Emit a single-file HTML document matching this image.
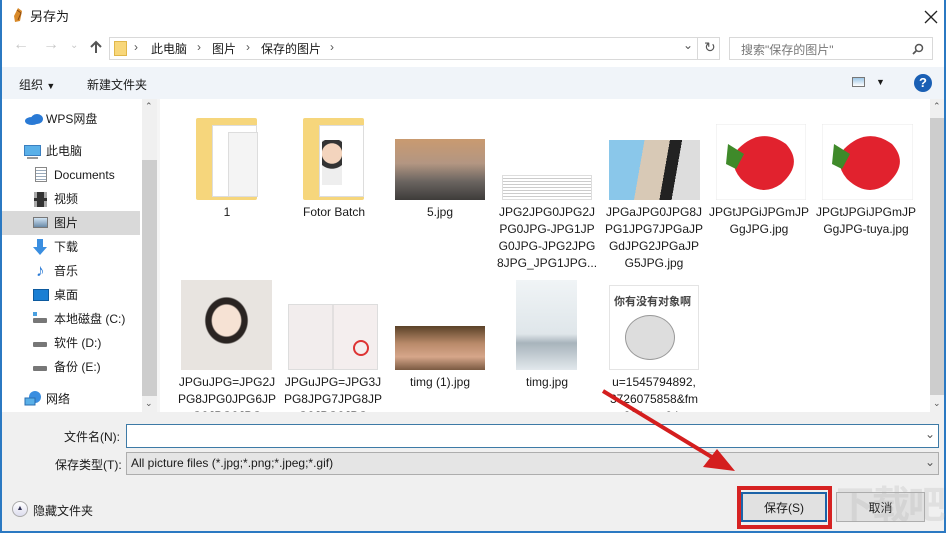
<!DOCTYPE html>
<html><head><meta charset="utf-8"><style>
*{margin:0;padding:0;box-sizing:border-box}
html,body{width:946px;height:533px;overflow:hidden}
body{background:#fff;font-family:"Liberation Sans","Noto Sans CJK SC",sans-serif;font-size:12px;color:#1a1a1a;position:relative}
.a{position:absolute;white-space:nowrap}
.lbl{position:absolute;width:100px;text-align:center;line-height:17px;font-size:12px;overflow:hidden}
.side div{position:absolute;left:0;width:142px;height:24px;line-height:24px;font-size:12px}
.ico{position:absolute}
</style></head><body>
<div class="a" style="left:0;top:0;width:2px;height:533px;background:#2b79c2"></div>
<div class="a" style="right:0;top:0;width:2px;height:533px;background:#2b79c2"></div>
<div class="a" style="left:0;bottom:0;width:946px;height:2px;background:#2b79c2"></div>
<!-- title -->
<svg class="a" style="left:12px;top:7px" width="12" height="16"><path d="M6 1 L10 4 L8 14 L3 15 L2 9 Z" fill="#d98a2a"/><path d="M5 3 L9 6 L6 13" stroke="#8a4a12" fill="none"/></svg>
<div class="a" style="left:30px;top:6px;font-size:13px">另存为</div>
<svg class="a" style="left:322px;top:0;left:924px;top:10px" width="14" height="14"><path d="M1 1L13 13M13 1L1 13" stroke="#222" stroke-width="1.3"/></svg>
<!-- nav -->
<div class="a" style="left:13px;top:36px;font-size:16px;color:#c8c8c8">←</div>
<div class="a" style="left:43px;top:36px;font-size:16px;color:#c8c8c8">→</div>
<div class="a" style="left:70px;top:40px;font-size:10px;color:#c8c8c8">⌄</div>
<svg class="a" style="left:89px;top:40px" width="14" height="14"><path d="M7 13V2M2 7L7 2L12 7" stroke="#555" stroke-width="2" fill="none"/></svg>
<div class="a" style="left:109px;top:37px;width:611px;height:23px;border:1px solid #d9d9d9"></div>
<div class="a" style="left:114px;top:41px;width:13px;height:15px;background:#f8d77a;border:1px solid #e0b74a"></div>
<div class="a" style="left:134px;top:40px;color:#555">›</div>
<div class="a" style="left:151px;top:40px">此电脑</div>
<div class="a" style="left:197px;top:40px;color:#555">›</div>
<div class="a" style="left:212px;top:40px">图片</div>
<div class="a" style="left:246px;top:40px;color:#555">›</div>
<div class="a" style="left:261px;top:40px">保存的图片</div>
<div class="a" style="left:330px;top:40px;color:#555">›</div>
<div class="a" style="left:683px;top:38px;color:#555;font-size:12px">⌄</div>
<div class="a" style="left:697px;top:37px;width:1px;height:23px;background:#d9d9d9"></div>
<div class="a" style="left:704px;top:39px;color:#555;font-size:14px">↻</div>
<div class="a" style="left:729px;top:37px;width:204px;height:23px;border:1px solid #d9d9d9"></div>
<div class="a" style="left:741px;top:41px;color:#777">搜索"保存的图片"</div>
<svg class="a" style="left:912px;top:43px" width="12" height="12"><circle cx="7" cy="5" r="3.5" stroke="#555" stroke-width="1.5" fill="none"/><path d="M4.5 7.5L1 11" stroke="#555" stroke-width="1.8"/></svg>
<!-- toolbar -->
<div class="a" style="left:2px;top:67px;width:942px;height:32px;background:#f0f4f9"></div>
<div class="a" style="left:19px;top:76px">组织 <span style="font-size:9px">▼</span></div>
<div class="a" style="left:87px;top:76px">新建文件夹</div>
<div class="a" style="left:852px;top:77px;width:13px;height:10px;border:1px solid #777;background:linear-gradient(#9ec7e6,#fff)"></div>
<div class="a" style="left:876px;top:77px;font-size:9px">▼</div>
<div class="a" style="left:914px;top:74px;width:18px;height:18px;border-radius:50%;background:#1a5fb4;color:#fff;font-weight:bold;text-align:center;line-height:18px;font-size:13px">?</div>
<!-- sidebar -->
<div class="a" style="left:2px;top:99px;width:140px;height:313px;background:#fff"></div>
<div class="a" style="left:142px;top:99px;width:15px;height:313px;background:#f0f0f0"></div>
<div class="a" style="left:142px;top:160px;width:15px;height:236px;background:#cdcdcd"></div>
<div class="a" style="left:145px;top:101px;font-size:9px;color:#555">⌃</div>
<div class="a" style="left:145px;top:398px;font-size:9px;color:#555">⌄</div>
<div class="a" style="left:157px;top:99px;width:3px;height:313px;background:#f5f5f5"></div>
<div class="a" style="left:2px;top:211px;width:138px;height:24px;background:#d9d9d9"></div>
<div class="side">
<div style="top:107px;left:46px">WPS网盘</div>
<div style="top:139px;left:46px">此电脑</div>
<div style="top:163px;left:54px">Documents</div>
<div style="top:187px;left:54px">视频</div>
<div style="top:211px;left:54px">图片</div>
<div style="top:235px;left:54px">下载</div>
<div style="top:259px;left:54px">音乐</div>
<div style="top:283px;left:54px">桌面</div>
<div style="top:307px;left:54px">本地磁盘 (C:)</div>
<div style="top:331px;left:54px">软件 (D:)</div>
<div style="top:355px;left:54px">备份 (E:)</div>
<div style="top:387px;left:46px">网络</div>
</div>
<svg class="ico" style="left:24px;top:112px" width="20" height="14"><ellipse cx="8" cy="9" rx="7" ry="4" fill="#2a7ad5"/><ellipse cx="13" cy="7" rx="6" ry="5" fill="#2a7ad5"/></svg>
<div class="ico" style="left:24px;top:145px;width:17px;height:11px;background:#5ab0e8;border:1px solid #3a7fc0"></div><div class="ico" style="left:27px;top:157px;width:11px;height:2px;background:#999"></div>
<div class="ico" style="left:35px;top:167px;width:12px;height:15px;border:1px solid #888;background:repeating-linear-gradient(#fff 0 2px,#9ab 2px 3px)"></div>
<div class="ico" style="left:34px;top:192px;width:13px;height:15px;background:#333;border-left:3px dashed #aaa;border-right:3px dashed #aaa"></div>
<div class="ico" style="left:33px;top:217px;width:15px;height:11px;border:1px solid #777;background:linear-gradient(#cfe3f3,#6a8aa8)"></div>
<svg class="ico" style="left:32px;top:239px" width="16" height="16"><path d="M5 0h6v8h4L8 16L1 8h4z" fill="#3a8ee0"/></svg>
<div class="ico" style="left:36px;top:262px;font-size:17px;color:#2a7ad5;line-height:17px">♪</div>
<div class="ico" style="left:33px;top:289px;width:16px;height:12px;background:#1a7fd4;border:1px solid #0d5a9e"></div>
<div class="ico" style="left:33px;top:318px;width:14px;height:5px;background:#777;border-radius:1px"></div><div class="ico" style="left:33px;top:312px;width:4px;height:4px;background:#4aa0e0"></div>
<div class="ico" style="left:33px;top:342px;width:14px;height:5px;background:#777;border-radius:1px"></div>
<div class="ico" style="left:33px;top:366px;width:14px;height:5px;background:#777;border-radius:1px"></div>
<svg class="ico" style="left:24px;top:391px" width="18" height="16"><circle cx="11" cy="6" r="6" fill="#3a8ee0"/><rect x="1" y="7" width="10" height="7" fill="#5ab0e8" stroke="#2a6eb0"/></svg>
<!-- content -->
<div class="a" style="left:930px;top:99px;width:14px;height:313px;background:#f0f0f0"></div>
<div class="a" style="left:930px;top:118px;width:14px;height:277px;background:#cdcdcd"></div>
<div class="a" style="left:933px;top:101px;font-size:9px;color:#555">⌃</div>
<div class="a" style="left:933px;top:398px;font-size:9px;color:#555">⌄</div>
<!-- folders -->
<div class="a" style="left:196px;top:118px;width:61px;height:82px;background:#f6d67c;border-radius:2px"></div>
<div class="a" style="left:212px;top:125px;width:45px;height:72px;background:#fff;border:1px solid #ddd"></div>
<div class="a" style="left:228px;top:132px;width:30px;height:65px;background:#f4f4f4;border:1px solid #ddd"></div>
<div class="a" style="left:303px;top:118px;width:61px;height:82px;background:#f6d67c;border-radius:2px"></div>
<div class="a" style="left:319px;top:125px;width:45px;height:72px;background:#fff;border:1px solid #ddd"></div>
<div class="a" style="left:322px;top:140px;width:20px;height:45px;background:radial-gradient(circle at 50% 30%,#f3d4bd 30%,#333 32% 45%,#eee 47%)"></div>
<div class="a" style="left:395px;top:139px;width:90px;height:61px;background:linear-gradient(#c99a70,#b39682 40%,#6a6460 70%,#3e3c3a)"></div>
<div class="a" style="left:502px;top:175px;width:90px;height:25px;background:repeating-linear-gradient(#fff 0 2px,#ccc 2px 3px);border:1px solid #ddd"></div>
<div class="a" style="left:609px;top:140px;width:91px;height:60px;background:linear-gradient(100deg,#8ac7ea 0 35%,#d8c9b6 35% 60%,#222 60% 72%,#ddd 72%)"></div>
<svg class="a" style="left:716px;top:124px" width="90" height="76"><rect width="90" height="76" fill="#fff" stroke="#e8e8e8"/><path d="M22 25 Q45 2 70 20 Q88 40 65 60 Q45 74 25 55 Q12 40 22 25Z" fill="#e1222e"/><path d="M12 20 L28 30 L20 45 L10 40Z" fill="#3f8a2a"/></svg>
<svg class="a" style="left:822px;top:124px" width="91" height="76"><rect width="91" height="76" fill="#fff" stroke="#e8e8e8"/><path d="M22 25 Q45 2 70 20 Q88 40 65 60 Q45 74 25 55 Q12 40 22 25Z" fill="#e1222e"/><path d="M12 20 L28 30 L20 45 L10 40Z" fill="#3f8a2a"/></svg>
<div class="lbl" style="left:177px;top:204px">1</div>
<div class="lbl" style="left:284px;top:204px">Fotor Batch</div>
<div class="lbl" style="left:390px;top:204px">5.jpg</div>
<div class="lbl" style="left:497px;top:204px">JPG2JPG0JPG2J<br>PG0JPG-JPG1JP<br>G0JPG-JPG2JPG<br>8JPG_JPG1JPG...</div>
<div class="lbl" style="left:604px;top:204px">JPGaJPG0JPG8J<br>PG1JPG7JPGaJP<br>GdJPG2JPGaJP<br>G5JPG.jpg</div>
<div class="lbl" style="left:709px;top:204px">JPGtJPGiJPGmJP<br>GgJPG.jpg</div>
<div class="lbl" style="left:816px;top:204px">JPGtJPGiJPGmJP<br>GgJPG-tuya.jpg</div>
<!-- row2 -->
<div class="a" style="left:181px;top:280px;width:91px;height:90px;background:radial-gradient(ellipse at 50% 45%,#f6e2d4 22%,#2a2422 24% 32%,#e8e4e0 34%)"></div>
<div class="a" style="left:288px;top:304px;width:90px;height:66px;background:linear-gradient(90deg,#f2eded 49%,#ccc 50%,#f4eeee 51%);border:1px solid #ddd"></div>
<div class="a" style="left:353px;top:340px;width:16px;height:16px;border-radius:50%;border:2px solid #d33"></div>
<div class="a" style="left:395px;top:326px;width:90px;height:44px;background:linear-gradient(#5a4228,#b98a6a 40%,#d6a68a 70%,#7a5a42)"></div>
<div class="a" style="left:516px;top:280px;width:61px;height:90px;background:linear-gradient(#f0f4f6,#dfe6ea 60%,#a8b4bc 70%,#e2e8ec)"></div>
<div class="a" style="left:609px;top:285px;width:90px;height:85px;background:#fff;border:1px solid #e4e4e4"></div>
<div class="a" style="left:614px;top:293px;font-size:11px;color:#444;font-weight:bold">你有没有对象啊</div>
<div class="a" style="left:625px;top:315px;width:50px;height:45px;border-radius:50%;background:#ddd;border:1px solid #999"></div>
<div class="lbl" style="left:177px;top:374px;height:38px">JPGuJPG=JPG2J<br>PG8JPG0JPG6JP<br>G8JPG8JPG</div>
<div class="lbl" style="left:283px;top:374px;height:38px">JPGuJPG=JPG3J<br>PG8JPG7JPG8JP<br>G8JPG8JPG</div>
<div class="lbl" style="left:390px;top:374px">timg (1).jpg</div>
<div class="lbl" style="left:497px;top:374px">timg.jpg</div>
<div class="lbl" style="left:604px;top:374px;height:38px">u=1545794892,<br>3726075858&amp;fm<br>=26&amp;gp=0.jpg</div>
<!-- bottom panel -->
<div class="a" style="left:2px;top:412px;width:942px;height:119px;background:#f0f0f0"></div>
<div class="a" style="left:64px;top:428px">文件名(N):</div>
<div class="a" style="left:126px;top:424px;width:813px;height:24px;background:#fff;border:1px solid #3d7aa6"></div>
<div class="a" style="left:925px;top:427px;color:#555">⌄</div>
<div class="a" style="left:55px;top:456px">保存类型(T):</div>
<div class="a" style="left:126px;top:452px;width:813px;height:23px;background:#e5e5e5;border:1px solid #adadad"></div>
<div class="a" style="left:131px;top:456px">All picture files (*.jpg;*.png;*.jpeg;*.gif)</div>
<div class="a" style="left:925px;top:455px;color:#555">⌄</div>
<div class="a" style="left:12px;top:501px;width:16px;height:16px;border-radius:50%;background:linear-gradient(#fff,#dde);border:1px solid #aaa;text-align:center;font-size:7px;line-height:14px;color:#335">▲</div>
<div class="a" style="left:33px;top:502px">隐藏文件夹</div>
<div class="a" style="left:741px;top:492px;width:86px;height:30px;background:#e1e1e1;border:2px solid #1c63a8"></div>
<div class="a" style="left:741px;top:499px;width:86px;text-align:center">保存(S)</div>
<div class="a" style="left:836px;top:492px;width:89px;height:30px;background:#e1e1e1;border:1px solid #adadad"></div>
<div class="a" style="left:836px;top:499px;width:89px;text-align:center">取消</div>
<div class="a" style="left:737px;top:486px;width:95px;height:43px;border:4px solid #d62222"></div>
<div class="a" style="left:836px;top:484px;font-size:38px;line-height:44px;color:rgba(170,170,170,0.22);font-weight:bold;letter-spacing:-2px">下载吧</div>
<svg class="a" style="left:595px;top:385px" width="150" height="95"><path d="M8 6 L120 74" stroke="#d41e1e" stroke-width="4"/><path d="M140 86 L108 82 L122 64 Z" fill="#d41e1e"/></svg>
</body></html>
